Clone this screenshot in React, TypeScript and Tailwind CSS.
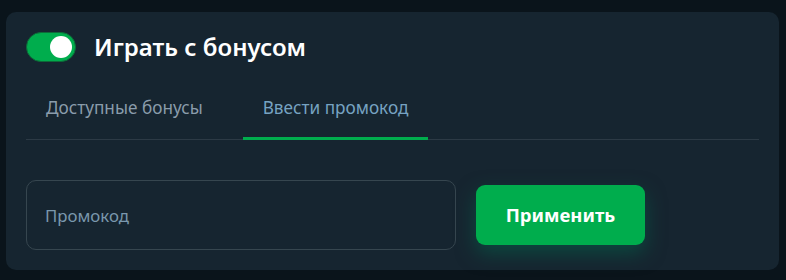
import { useState } from "react";

export default function App() {
  const [enabled, setEnabled] = useState(true);
  const [tab, setTab] = useState<"list" | "code">("code");
  const [code, setCode] = useState("");

  return (
    <div
      className="min-h-[280px] w-full bg-[#0a141b] pt-3 pl-[6px] pr-[7px] pb-[11px]"
      style={{ fontFamily: '"Noto Sans", "Open Sans", sans-serif' }}
    >
      <div className="rounded-[10px] bg-[#162530] px-5 pt-5 pb-5">
        {/* header */}
        <div className="flex items-center gap-[18px]">
          <button
            type="button"
            onClick={() => setEnabled((v) => !v)}
            className={`relative h-[30px] w-[50px] rounded-full border border-[#0d6a38] ${
              enabled ? "bg-[#00ad4d]" : "bg-[#34444f]"
            }`}
            aria-label="Играть с бонусом"
          >
            <span
              className={`absolute top-[3px] h-[22px] w-[22px] rounded-full bg-white ${
                enabled ? "left-[23px]" : "left-[3px]"
              }`}
            />
          </button>
          <h2 className="text-[24px] font-semibold leading-none text-white">
            Играть с бонусом
          </h2>
        </div>

        {/* tabs */}
        <div className="mt-4 flex border-b border-[#2c3a45]">
          <button
            type="button"
            onClick={() => setTab("list")}
            className={`-mb-px h-[62px] border-b-[3px] px-5 pt-[1px] text-[17.2px] ${
              tab === "list"
                ? "border-[#00ad4d] text-[#76a3c2]"
                : "border-transparent text-[#8a9cab]"
            }`}
          >
            Доступные бонусы
          </button>
          <button
            type="button"
            onClick={() => setTab("code")}
            className={`-mb-px ml-5 h-[62px] border-b-[3px] px-5 pt-[1px] text-[17.2px] ${
              tab === "code"
                ? "border-[#00ad4d] text-[#76a3c2]"
                : "border-transparent text-[#8a9cab]"
            }`}
          >
            Ввести промокод
          </button>
        </div>

        {/* promo form */}
        <div className="mt-10 flex items-center gap-5">
          <input
            value={code}
            onChange={(e) => setCode(e.target.value)}
            placeholder="Промокод"
            className="h-[70px] w-[430px] rounded-[10px] border border-[#36464f] bg-transparent pl-[18px] pr-5 text-[16.8px] text-white outline-none placeholder:text-[#7a98ad]"
          />
          <button
            type="button"
            className="h-[60px] w-[169px] rounded-[9px] bg-[#00ad4d] text-[18.5px] font-bold text-white shadow-[0_8px_20px_rgba(0,110,80,0.5)]"
          >
            Применить
          </button>
        </div>
      </div>
    </div>
  );
}
